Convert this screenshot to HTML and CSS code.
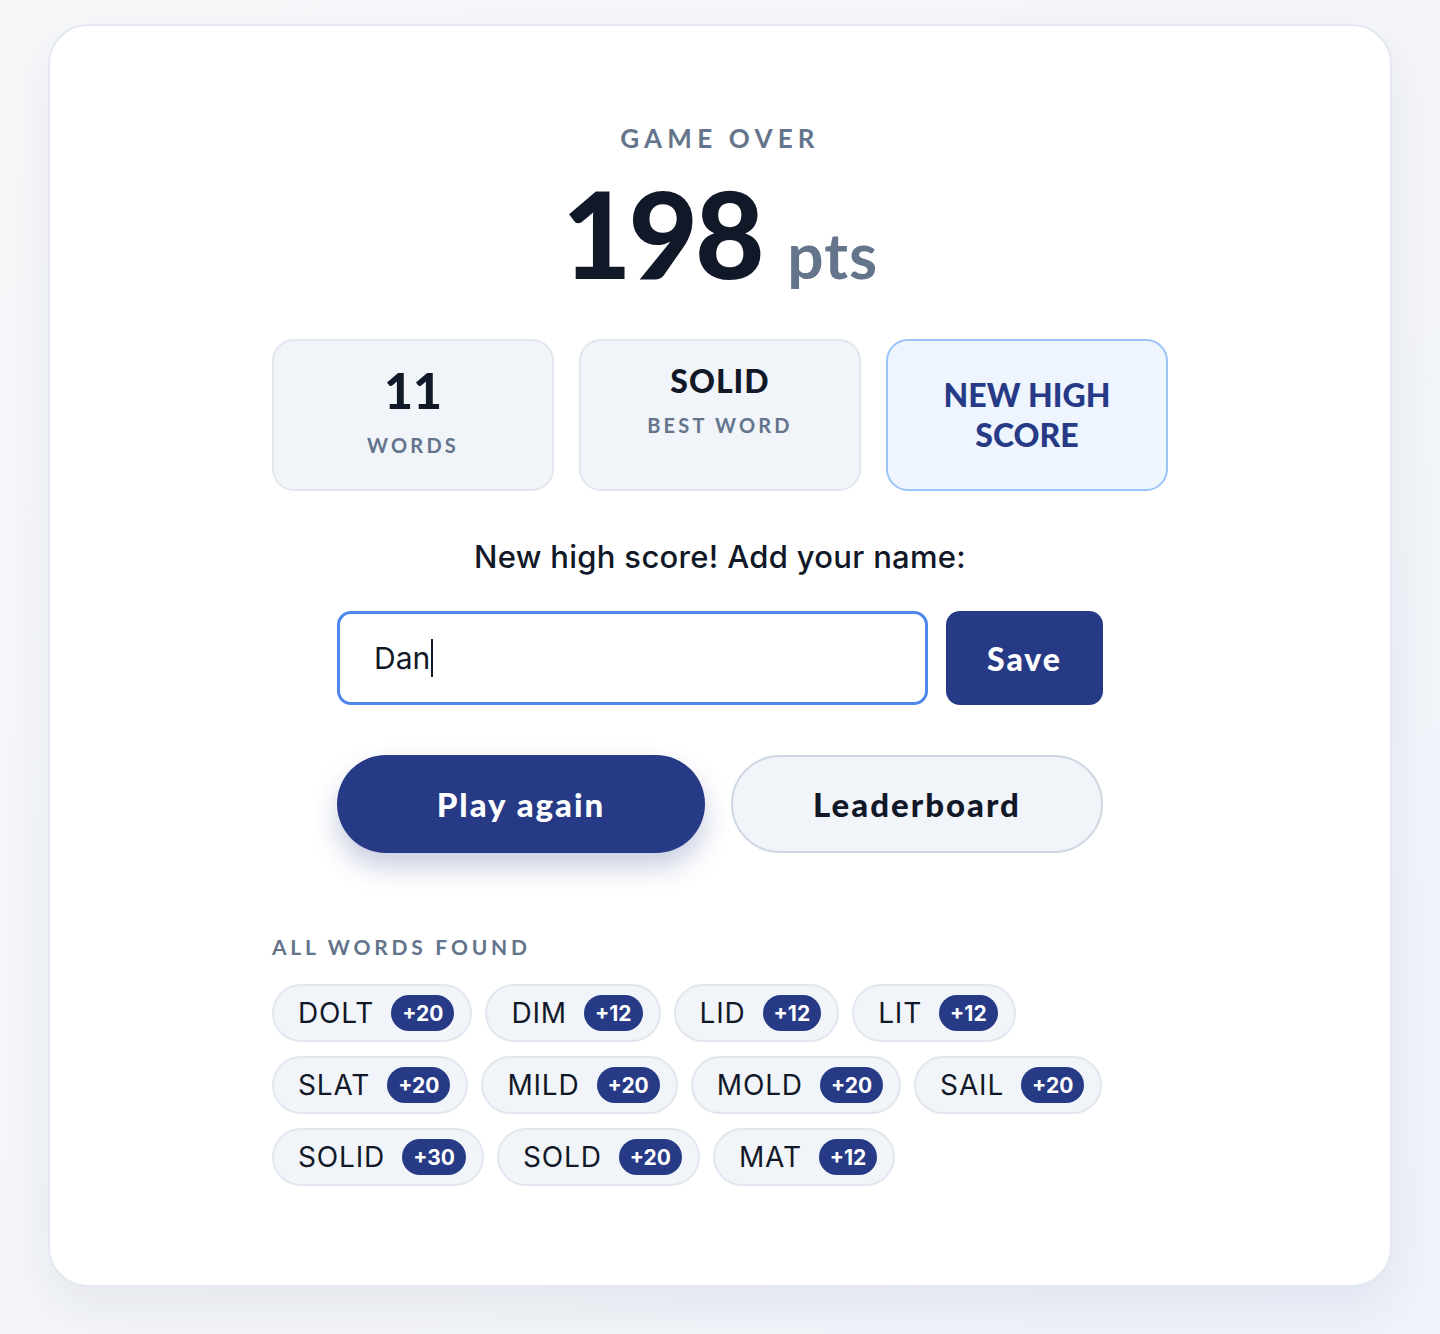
FILE: index.html
```html
<!DOCTYPE html>
<html lang="en">
<head>
  <meta charset="UTF-8" />
  <meta name="viewport" content="width=device-width, initial-scale=1.0"/>
  <title>Game Over</title>
  <link rel="stylesheet" href="styles.css">
</head>
<body>

  <main class="card">
    <div class="content">
      <p class="eyebrow">GAME OVER</p>
      <h1 class="score">198 <span class="unit">pts</span></h1>

      <div class="stats">
        <div class="stat">
          <div class="stat-value stat-num">11</div>
          <div class="stat-label">WORDS</div>
        </div>
        <div class="stat">
          <div class="stat-value">SOLID</div>
          <div class="stat-label">BEST WORD</div>
        </div>
        <div class="stat stat-highlight">
          <div class="stat-value">NEW HIGH<br>SCORE</div>
        </div>
      </div>

      <p class="prompt">New high score! Add your name:</p>

      <form class="name-form" onsubmit="return false">
        <div class="name-input"><span>Dan</span><span class="caret"></span></div>
        <button class="btn-save" type="submit">Save</button>
      </form>

      <div class="actions">
        <button class="btn btn-primary">Play again</button>
        <button class="btn btn-secondary">Leaderboard</button>
      </div>

      <section class="found">
        <h2 class="section-title">ALL WORDS FOUND</h2>
        <ul class="chips">
          <li class="chip">DOLT<span class="badge">+20</span></li>
          <li class="chip">DIM<span class="badge">+12</span></li>
          <li class="chip">LID<span class="badge">+12</span></li>
          <li class="chip">LIT<span class="badge">+12</span></li>
          <li class="chip">SLAT<span class="badge">+20</span></li>
          <li class="chip">MILD<span class="badge">+20</span></li>
          <li class="chip">MOLD<span class="badge">+20</span></li>
          <li class="chip">SAIL<span class="badge">+20</span></li>
          <li class="chip">SOLID<span class="badge">+30</span></li>
          <li class="chip">SOLD<span class="badge">+20</span></li>
          <li class="chip">MAT<span class="badge">+12</span></li>
        </ul>
      </section>
    </div>
  </main>

</body>
</html>
```

FILE: styles.css
```css
body {
  margin: 0;
  padding: 24px 48px 48px;
  font-family: Inter, "Noto Sans", sans-serif;
  color: #111827;
  background: linear-gradient(135deg, #f7f8fa 0%, #f3f5f8 60%, #eef2fb 100%);
  min-height: 100vh;
  box-sizing: border-box;
}

.card {
  background: #fff;
  border: 2px solid #e4e8f0;
  border-radius: 40px;
  padding: 96px 0 99px;
  box-shadow: 0 20px 50px rgba(30, 41, 80, 0.07);
}

.content {
  max-width: 896px;
  margin: 0 auto;
  text-align: center;
}

.eyebrow {
  margin: 0;
  font-family: Lato, sans-serif;
  font-size: 26px;
  font-weight: 700;
  letter-spacing: 0.2em;
  line-height: 32px;
  color: #64748b;
}

.score {
  margin: 19px 0 0;
  font-family: Lato, sans-serif;
  font-size: 120px;
  font-weight: 900;
  line-height: 1;
  letter-spacing: -3px;
  color: #111827;
}

.score .unit {
  font-size: 64px;
  font-weight: 700;
  letter-spacing: 1px;
  color: #64748b;
}

.stats {
  display: grid;
  grid-template-columns: repeat(3, 1fr);
  gap: 25px;
  margin-top: 46px;
}

.stat {
  min-height: 152px;
  box-sizing: border-box;
  padding: 22px 16px;
  background: #f1f4f9;
  border: 2px solid #e2e7ef;
  border-radius: 22px;
  display: flex;
  flex-direction: column;
  align-items: center;
}

.stat-value {
  font-family: Lato, sans-serif;
  font-size: 32px;
  font-weight: 900;
  line-height: 35px;
  letter-spacing: 1px;
  color: #111827;
}

.stat-num {
  font-size: 50px;
  line-height: 55px;
  letter-spacing: 0;
}

.stat-label {
  margin-top: 15px;
  font-family: Lato, sans-serif;
  font-size: 20px;
  font-weight: 700;
  letter-spacing: 0.16em;
  color: #64748b;
}

.stat-highlight {
  justify-content: center;
  background: #eef5ff;
  border-color: #9cc3f7;
}

.stat-highlight .stat-value {
  line-height: 40px;
  letter-spacing: 0;
  color: #263a86;
}

.prompt {
  margin: 46px 0 0;
  font-size: 31px;
  font-weight: 500;
  line-height: 40px;
  letter-spacing: 0.01em;
  color: #111827;
}

.name-form {
  display: flex;
  gap: 18px;
  max-width: 766px;
  margin: 34px auto 0;
}

.name-input {
  flex: 1;
  height: 94px;
  box-sizing: border-box;
  display: flex;
  align-items: center;
  padding: 0 34px;
  border: 3px solid #4f86ec;
  border-radius: 14px;
  font-size: 30px;
  color: #111827;
  text-align: left;
}

.caret {
  display: inline-block;
  width: 2px;
  height: 38px;
  margin-left: 1px;
  background: #111827;
}

.btn-save {
  width: 157px;
  height: 94px;
  border: none;
  border-radius: 14px;
  background: #263a86;
  color: #fff;
  font-family: Lato, sans-serif;
  font-size: 32px;
  font-weight: 900;
  letter-spacing: 2px;
  cursor: pointer;
}

.actions {
  display: flex;
  gap: 26px;
  max-width: 766px;
  margin: 50px auto 0;
}

.btn {
  flex: 1;
  height: 98px;
  border-radius: 49px;
  font-family: Lato, sans-serif;
  font-size: 33px;
  font-weight: 900;
  letter-spacing: 2px;
  cursor: pointer;
}

.btn-primary {
  border: none;
  background: #263a86;
  color: #fff;
  box-shadow: 0 14px 26px rgba(38, 58, 134, 0.25);
}

.btn-secondary {
  background: #f1f4f9;
  border: 2px solid #cfd7e3;
  color: #111827;
}

.found {
  margin-top: 81px;
  text-align: left;
}

.section-title {
  margin: 0;
  font-family: Lato, sans-serif;
  font-size: 21px;
  font-weight: 700;
  letter-spacing: 0.18em;
  line-height: 26px;
  color: #64748b;
}

.chips {
  list-style: none;
  margin: 24px 0 0;
  padding: 0;
  display: flex;
  flex-wrap: wrap;
  gap: 14px 13px;
}

.chip {
  display: flex;
  align-items: center;
  gap: 17px;
  height: 58px;
  box-sizing: border-box;
  padding: 0 16px 0 24px;
  background: #f1f4f9;
  border: 2px solid #e2e7ef;
  border-radius: 29px;
  font-size: 28px;
  letter-spacing: 0.03em;
  color: #111827;
}

.badge {
  display: inline-flex;
  align-items: center;
  height: 36px;
  padding: 0 11px;
  border-radius: 18px;
  background: #263a86;
  color: #fff;
  font-size: 21px;
  font-weight: 700;
  letter-spacing: 0;
}
```
